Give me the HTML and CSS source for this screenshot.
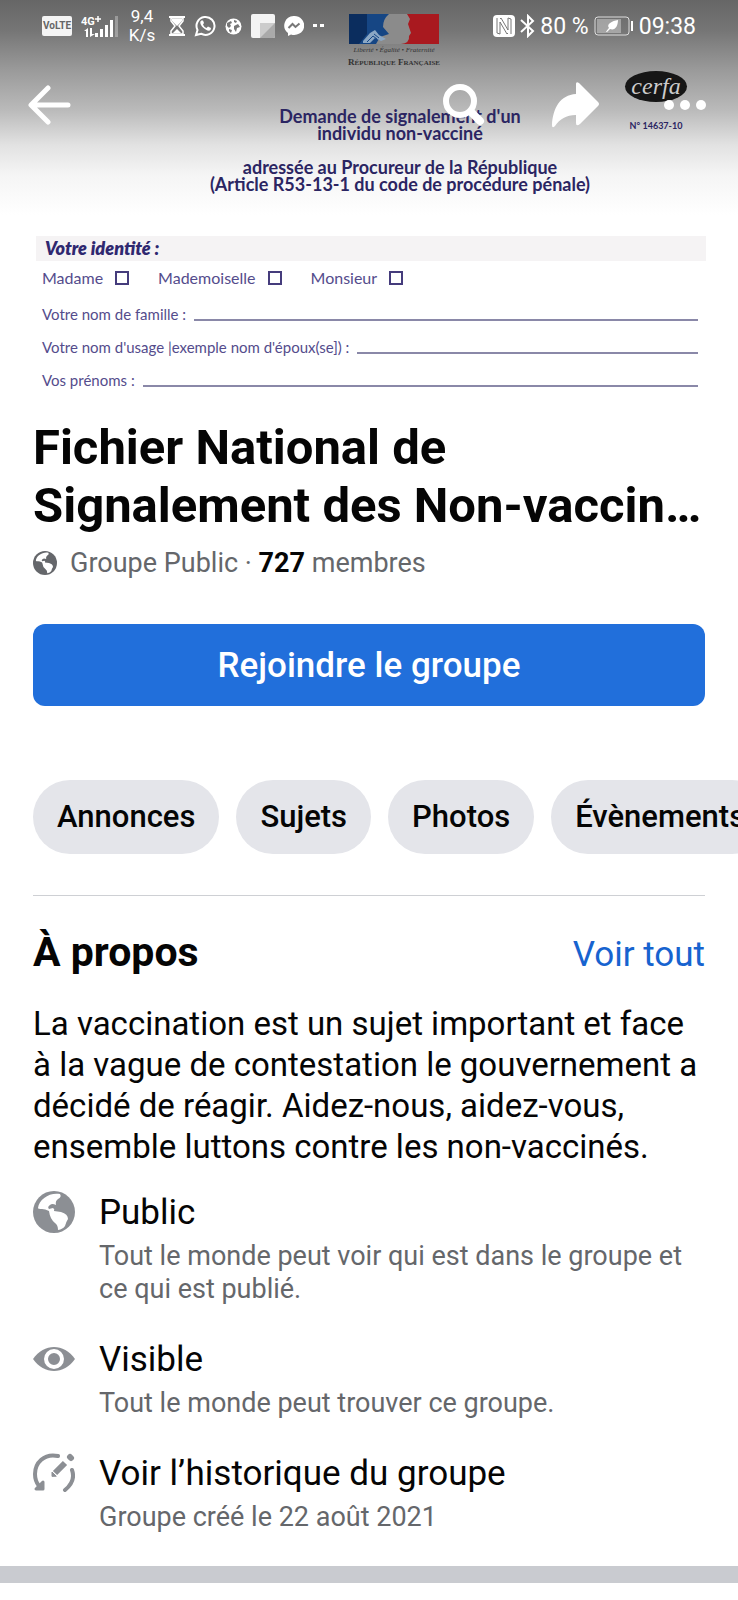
FILE: index.html
```html
<!DOCTYPE html>
<html lang="fr">

<head>
  <meta charset="UTF-8">
  <meta name="viewport" content="width=device-width, initial-scale=1.0">
  <title>Fichier National de Signalement</title>
  <link rel="stylesheet" href="styles.css">
</head>

<body>
  <div class="cover">
    <div class="overlay">
      <div class="status">
        <div class="status-left">
          <span class="volte">VoLTE</span>
          <svg width="38" height="24" viewBox="0 0 38 24" fill="#fff">
            <text x="0" y="11" class="signal-text">4G</text>
            <path d="M17 2v6M14 5h6" stroke="#fff" stroke-width="1.5" />
            <path d="M3 17l4-3v9H5v-6zM9 14h2v6h3l-5 3z" />
            <path d="M14 19h3v4h-3zM19 15h3v8h-3zM24 11h3v12h-3zM29 6h3v17h-3z" />
            <path d="M34 2h3v21h-3z" opacity=".3" />
          </svg>
          <span class="speed">9,4<br>K/s</span>
          <svg width="16" height="20" viewBox="0 0 16 20" fill="none" stroke="#fff" stroke-width="2">
            <path d="M0 1h16M0 19h16" />
            <path d="M2 2h12v3l-4 5 4 5v3H2v-3l4-5-4-5z" stroke-width="1.5" />
            <path d="M3 3h10v2l-5 5-5-5zM4 17l4-4 4 4z" fill="#fff" stroke="none" />
          </svg>
          <svg width="22" height="22" viewBox="0 0 22 22" fill="none" stroke="#fff" stroke-width="2">
            <path d="M2 20l1.500-5A9 9 0 1 1 7 18.700z" />
            <path d="M7.500 5.500c-2 1-1.500 4 1.500 7s6 4 7.500 2.500l.500-2-3-1.500-1.500 1.500c-1.500-.500-3-2-3.500-3.500L10 8 9 5.500z" fill="#fff" stroke="none" />
          </svg>
          <svg width="17" height="17" viewBox="0 0 17 17">
            <circle cx="8.500" cy="8.500" r="8" fill="#fff" />
            <path d="M2 5l4-2 1 2-2 1 1 2-2 2-2-2zM9 2l3 1-1 2-2-1zM9 8l4-2 2 3-3 1-1 4-2-3zM4 11l3 1-1 3-2-2z" fill="#777" />
          </svg>
          <svg width="24" height="24" viewBox="0 0 24 24">
            <rect width="24" height="24" rx="2" fill="#f4f4f4" />
            <path d="M9 9h15v13a2 2 0 0 1-2 2H9z" fill="#ccc" />
            <path d="M24 9v13a2 2 0 0 1-2 2H9z" fill="#aaa" />
          </svg>
          <svg width="20" height="20" viewBox="0 0 20 20">
            <path d="M10 0a10 9.500 0 1 1-3 18.500L4 20v-3A9.500 9.500 0 0 1 10 0z" fill="#fff" />
            <path d="M4.500 12l4-4 3 3 4-3.500" fill="none" stroke="#777" stroke-width="2" />
          </svg>
          <svg width="12" height="4" viewBox="0 0 12 4" fill="#fff">
            <path d="M0 0h4v3H0zM7 0h4v3H7z" />
          </svg>
        </div>
        <div class="status-right">
          <svg width="22" height="22" viewBox="0 0 22 22">
            <rect width="22" height="22" rx="4" fill="#fff" />
            <path d="M4 3v15l3 1V7l7 12 1-1M18 19V4l-3-1v12L8 3 7 4" fill="none" stroke="#777" />
          </svg>
          <svg width="15" height="24" viewBox="0 0 15 24" fill="none" stroke="#fff" stroke-width="2">
            <path d="M1 6l12 11-5 5V2l5 5L1 18" />
          </svg>
          <span>80 %</span>
          <svg width="40" height="20" viewBox="0 0 40 20">
            <rect x="1" y="1" width="34" height="18" rx="3" fill="none" stroke="#ddd" />
            <rect x="3" y="3" width="24" height="14" fill="#fff" opacity=".35" />
            <path d="M12 16c1-2 2-3 3-4-3-4 3-7 9-8 0 6-3 11-8 9l-3 3z" fill="#fff" />
            <path d="M37 5h2v10h-2z" fill="#fff" />
          </svg>
          <span>09:38</span>
        </div>
      </div>
      <div class="toolbar">
        <button type="button" aria-label="Retour">
          <svg width="44" height="40" viewBox="0 0 44 40" fill="none" stroke="#fff" stroke-width="5" stroke-linecap="round" stroke-linejoin="round">
            <path d="M40 20H4M20 3L3 20l17 17" />
          </svg>
        </button>
        <div class="toolbar-right">
          <button type="button" aria-label="Rechercher">
            <svg width="42" height="42" viewBox="0 0 42 42" fill="none" stroke="#fff" stroke-linecap="round">
              <circle cx="17" cy="17" r="14" stroke-width="6" />
              <path d="M29 29l8 8" stroke-width="8" />
            </svg>
          </button>
          <button type="button" aria-label="Partager">
            <svg width="50" height="46" viewBox="-3 0 50 46" fill="#fff">
              <path d="M24 2q0-3 3-1l19 19q2 2 0 4L28 42q-4 3-4-1V33C14 33 8 37 3 44q-3 3-3-1C1 26 8 13 24 12z" />
            </svg>
          </button>
          <button type="button" aria-label="Plus">
            <svg width="44" height="12" viewBox="0 0 44 12" fill="#fff">
              <circle cx="6" cy="6" r="5" />
              <circle cx="22" cy="6" r="5" />
              <circle cx="38" cy="6" r="5" />
            </svg>
          </button>
        </div>
      </div>
    </div>

    <div class="letter">
      <div class="letter-main">
        <div class="logo">
          <svg width="90" height="30" viewBox="0 0 90 30">
            <rect width="90" height="30" fill="#8b8b8b" />
            <path d="M0 0h40q-6 5-6 13l6 7-9 3-4 7H0z" fill="#164684" />
            <path d="M0 0h18v20L10 30H0z" fill="#0b2d5e" />
            <path d="M14 27l7-8 5-3 4 5 7 4-5 2-6-3-5 5h-7z" fill="#8ba7c4" />
            <path d="M18 28l6-6 4 3M25 20l5 4" stroke="#164684" stroke-width="1" fill="none" />
            <path d="M58 0h32v30H52q9-1 8-8l2-3-3-9 2-5z" fill="#a9191f" />
          </svg>
          <span class="motto">Liberté • Égalité • Fraternité</span>
          <span class="republic">R<small>ÉPUBLIQUE</small> F<small>RANÇAISE</small></span>
        </div>
        <p>Demande de signalement d'un<br>individu non-vacciné</p>
        <p>adressée au Procureur de la République<br>(Article R53-13-1 du code de procédure pénale)</p>
      </div>
      <div class="letter-side">
        <span class="cerfa">cerfa</span>
        <span class="number">N° 14637-10</span>
      </div>
    </div>

    <form class="identity">
      <h2>Votre identité :</h2>
      <div class="civility">
        <label>Madame <input type="checkbox"></label>
        <label>Mademoiselle <input type="checkbox"></label>
        <label>Monsieur <input type="checkbox"></label>
      </div>
      <div class="field">
        <label for="nom">Votre nom de famille :</label>
        <input id="nom" type="text">
      </div>
      <div class="field">
        <label for="usage">Votre nom d'usage |exemple nom d'époux(se]) :</label>
        <input id="usage" type="text">
      </div>
      <div class="field">
        <label for="prenoms">Vos prénoms :</label>
        <input id="prenoms" type="text">
      </div>
    </form>
  </div>

  <main class="group">
    <h1>Fichier National de Signalement des Non-vaccin…</h1>
    <p class="meta">
      <svg width="24" height="24" viewBox="0 0 42 42">
        <circle cx="21" cy="21" r="21" fill="#65676b" />
        <path d="M5 17C6 8 17 1 27 3q2 3-2 5-3 2-2 6-4-2-6 0-3 2-1 4l4-1q2 1 1 3l7 1q7 2 7 7-2 3-3 7-2 3-7 4 0-5-3-7-5-4-6-12-4-2-7-2-4 0-4-1z" fill="#fff" />
      </svg>
      <span>Groupe Public · <b>727</b> membres</span>
    </p>
    <button type="button" class="join">Rejoindre le groupe</button>

    <nav class="tabs">
      <a href="#annonces">Annonces</a>
      <a href="#sujets">Sujets</a>
      <a href="#photos">Photos</a>
      <a href="#evenements">Évènements</a>
    </nav>

    <section class="about">
      <div class="about-head">
        <h2>À propos</h2>
        <a href="#apropos">Voir tout</a>
      </div>
      <p class="description">La vaccination est un sujet important et face à la vague de contestation le gouvernement a décidé de réagir. Aidez-nous, aidez-vous, ensemble luttons contre les non-vaccinés.</p>

      <div class="info">
        <svg width="42" height="42" viewBox="0 0 42 42">
          <circle cx="21" cy="21" r="21" fill="#8c8f94" />
          <path d="M5 17C6 8 17 1 27 3q2 3-2 5-3 2-2 6-4-2-6 0-3 2-1 4l4-1q2 1 1 3l7 1q7 2 7 7-2 3-3 7-2 3-7 4 0-5-3-7-5-4-6-12-4-2-7-2-4 0-4-1z" fill="#fff" />
        </svg>
        <div>
          <h3>Public</h3>
          <p>Tout le monde peut voir qui est dans le groupe et ce qui est publié.</p>
        </div>
      </div>
      <div class="info">
        <svg width="42" height="42" viewBox="0 0 42 42">
          <path d="M0 21C11 5 31 5 42 21 31 37 11 37 0 21z" fill="#8c8f94" />
          <circle cx="21" cy="21" r="8" fill="#8c8f94" stroke="#fff" stroke-width="4" />
        </svg>
        <div>
          <h3>Visible</h3>
          <p>Tout le monde peut trouver ce groupe.</p>
        </div>
      </div>
      <div class="info">
        <svg width="42" height="42" viewBox="0 0 42 42" fill="none" stroke="#8c8f94" stroke-width="4" stroke-linecap="round">
          <path d="M25 4C11 1 2 11 2 22q0 7 4 12" />
          <path d="M3 37h7v-7z" fill="#8c8f94" stroke-linejoin="round" stroke-width="3" />
          <path d="M39 18q4 11-7 20" />
          <path d="M22 21L32 11" stroke-width="6" stroke-linecap="butt" />
          <path d="M19 24v-4l4 4z" fill="#8c8f94" stroke-width="1" />
          <path d="M37 5l1 1" stroke-width="6" />
        </svg>
        <div>
          <h3>Voir l’historique du groupe</h3>
          <p>Groupe créé le 22 août 2021</p>
        </div>
      </div>
    </section>
  </main>
  <div class="separator"></div>
</body>

</html>
```

FILE: styles.css
```css
* {
  box-sizing: border-box;
}

body,
h1,
h2,
h3,
p {
  margin: 0;
}

body {
  font-family: Roboto, "Liberation Sans", sans-serif;
  color: #050505;
  background: #fff;
  overflow-x: hidden;
}

svg {
  display: block;
  flex-shrink: 0;
}

button {
  font-family: inherit;
  border: 0;
  padding: 0;
  background: none;
}

a {
  text-decoration: none;
}

/* cover */
.cover {
  position: relative;
  font-family: Lato, sans-serif;
  color: #2b2562;
  background: linear-gradient(#666 0, #757575 30px, #9a9a9a 70px, #bababa 110px, #e2e2e2 145px, #f5f5f5 175px, #fff 215px);
}

.overlay {
  position: absolute;
  top: 0;
  left: 0;
  right: 0;
  color: #fff;
  font-family: Roboto, sans-serif;
}

.status {
  display: flex;
  justify-content: space-between;
  height: 52px;
  padding: 0 42px;
}

.status-left,
.status-right {
  display: flex;
  align-items: center;
  gap: 9px;
}

.status-right {
  gap: 5px;
  font-size: 23px;
}

.volte {
  width: 30px;
  line-height: 20px;
  border-radius: 2px;
  background: #f4f4f4;
  color: #666;
  font-size: 10px;
  font-weight: 700;
  text-align: center;
}

.signal-text {
  font-size: 11px;
  font-weight: 700;
}

.speed {
  width: 28px;
  margin-right: 4px;
  font-size: 17px;
  line-height: 19px;
  text-align: center;
}

.toolbar {
  display: flex;
  justify-content: space-between;
  align-items: center;
  height: 106px;
  padding: 0 31px 0 28px;
}

.toolbar-right {
  display: flex;
  align-items: center;
  gap: 64px;
}

.letter {
  display: grid;
  grid-template-columns: 1fr 400px 1fr;
  height: 236px;
  padding: 14px 0 0 62px;
}

.letter-main {
  grid-column: 2;
  font-size: 18px;
  font-weight: 700;
  line-height: 17px;
  text-align: center;
}

.letter-main p {
  margin-bottom: 17px;
}

.logo {
  display: flex;
  flex-direction: column;
  align-items: center;
  height: 94px;
  padding-right: 12px;
  color: #333;
  font-family: "Liberation Serif", serif;
}

.motto {
  font-size: 7px;
  font-style: italic;
  font-weight: 400;
  line-height: 13px;
}

.republic {
  font-size: 9px;
  line-height: 10px;
}

.republic small {
  font-size: 7px;
}

.letter-side {
  display: flex;
  flex-direction: column;
  align-items: center;
  gap: 16px;
  padding: 57px 26px 0 0;
}

.cerfa {
  width: 62px;
  border-radius: 50%;
  background: #161616;
  color: #ccc;
  font-family: "Liberation Serif", serif;
  font-size: 24px;
  font-style: italic;
  line-height: 31px;
  text-align: center;
}

.number {
  font-size: 9px;
  font-weight: 700;
  line-height: 16px;
}

.identity {
  padding: 0 32px 17px 36px;
  color: #544c8c;
  font-size: 15px;
}

.identity h2 {
  padding-left: 9px;
  background: #f5f3f4;
  color: #2f2870;
  font-size: 18px;
  font-style: italic;
  font-weight: 800;
  line-height: 25px;
}

.civility {
  display: flex;
  gap: 29px;
  padding: 7px 6px 5px;
  font-size: 16px;
  line-height: 20px;
}

.civility label {
  display: flex;
  align-items: center;
  gap: 12px;
}

.civility input {
  appearance: none;
  width: 14px;
  height: 14px;
  margin: 0;
  border: 2px solid #453c7c;
}

.field {
  display: flex;
  align-items: flex-end;
  gap: 8px;
  height: 33px;
  padding: 0 8px 0 6px;
  line-height: 24px;
}

.field input {
  flex: 1;
  min-width: 0;
  height: 20px;
  margin-bottom: 5px;
  padding: 0;
  border: 0;
  border-bottom: 2px solid #8a88a8;
  background: none;
}

/* group */
.group {
  padding: 10px 33px 0;
}

.group h1 {
  font-size: 49px;
  line-height: 58px;
}

.meta {
  display: flex;
  align-items: center;
  gap: 13px;
  margin-top: 10px;
  color: #65676b;
  font-size: 27px;
  line-height: 36px;
}

.meta b {
  color: #050505;
}

.join {
  display: block;
  width: 100%;
  height: 82px;
  margin-top: 43px;
  border-radius: 12px;
  background: #216fdb;
  color: #fff;
  font-size: 35px;
  font-weight: 500;
}

.tabs {
  display: flex;
  gap: 17px;
  margin-top: 74px;
  margin-right: -33px;
  padding-bottom: 41px;
  overflow: hidden;
}

.tabs a {
  padding: 0 24px;
  border-radius: 37px;
  background: #e4e5ea;
  color: #050505;
  font-size: 31px;
  font-weight: 500;
  line-height: 74px;
}

.about {
  border-top: 1px solid #ced0d4;
  padding-top: 32px;
}

.about-head {
  display: flex;
  justify-content: space-between;
  align-items: baseline;
  line-height: 48px;
}

.about-head h2 {
  font-size: 41px;
}

.about-head a {
  color: #1763cf;
  font-size: 35px;
}

.description {
  margin-top: 24px;
  font-size: 33px;
  line-height: 41px;
}

.info {
  display: flex;
  align-items: flex-start;
  gap: 24px;
  margin-top: 24px;
}

.info + .info {
  margin-top: 32px;
}

.info h3 {
  margin-bottom: 5px;
  font-size: 35px;
  font-weight: 400;
  line-height: 44px;
}

.info p {
  color: #65676b;
  font-size: 27px;
  line-height: 33px;
}

.separator {
  height: 17px;
  margin-top: 32px;
  background: #c9cbd0;
}
```
